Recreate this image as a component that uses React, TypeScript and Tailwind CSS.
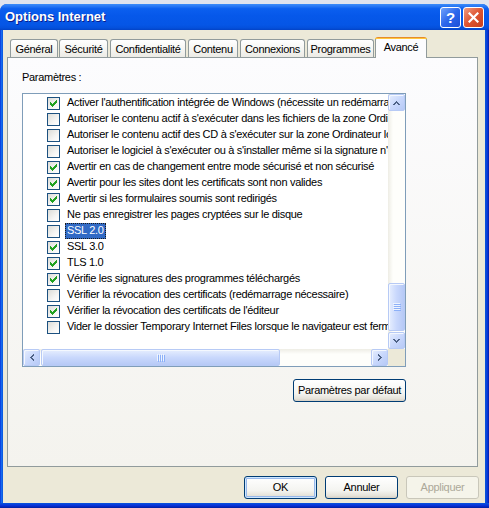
import React from "react";

const rows: [string, boolean][] = [
  ["Activer l'authentification intégrée de Windows (nécessite un redémarrage)", true],
  ["Autoriser le contenu actif à s'exécuter dans les fichiers de la zone Ordinateur local", false],
  ["Autoriser le contenu actif des CD à s'exécuter sur la zone Ordinateur local", false],
  ["Autoriser le logiciel à s'exécuter ou à s'installer même si la signature n'est pas valide", false],
  ["Avertir en cas de changement entre mode sécurisé et non sécurisé", true],
  ["Avertir pour les sites dont les certificats sont non valides", true],
  ["Avertir si les formulaires soumis sont redirigés", true],
  ["Ne pas enregistrer les pages cryptées sur le disque", false],
  ["SSL 2.0", false],
  ["SSL 3.0", true],
  ["TLS 1.0", true],
  ["Vérifie les signatures des programmes téléchargés", true],
  ["Vérifier la révocation des certificats (redémarrage nécessaire)", false],
  ["Vérifier la révocation des certificats de l'éditeur", true],
  ["Vider le dossier Temporary Internet Files lorsque le navigateur est fermé", false],
];

function CheckBox({ checked }: { checked: boolean }) {
  return (
    <div className="w-[13px] h-[13px] shrink-0 border border-[#1C5180] bg-[linear-gradient(135deg,#DCDCD7_0%,#F5F5F3_60%,#FFFFFF_100%)] flex items-center justify-center">
      {checked && (
        <svg width="7" height="7" viewBox="0 0 7 7" shapeRendering="crispEdges" fill="#21A121">
          <rect x="6" y="0" width="1" height="1" />
          <rect x="5" y="1" width="2" height="1" />
          <rect x="0" y="2" width="1" height="1" />
          <rect x="4" y="2" width="3" height="1" />
          <rect x="0" y="3" width="2" height="1" />
          <rect x="3" y="3" width="3" height="1" />
          <rect x="0" y="4" width="5" height="1" />
          <rect x="1" y="5" width="3" height="1" />
          <rect x="2" y="6" width="1" height="1" />
        </svg>
      )}
    </div>
  );
}

const scrollBtn =
  "w-[17px] h-[17px] shrink-0 rounded-[2px] border border-[#B7CAF5] bg-[linear-gradient(135deg,#E6EEFE_0%,#C9D8FC_50%,#B6C9F6_100%)] shadow-[inset_1px_1px_0_#F4F8FE] flex items-center justify-center";

function Arrow({ dir }: { dir: "up" | "down" | "left" | "right" }) {
  const up = [
    [3, 0, 1, 1],
    [2, 1, 3, 1],
    [1, 2, 2, 1],
    [4, 2, 2, 1],
    [0, 3, 2, 1],
    [5, 3, 2, 1],
  ];
  let rects = up;
  let w = 7,
    h = 4;
  if (dir === "down") rects = up.map(([x, y, rw, rh]) => [x, 3 - y, rw, rh]);
  if (dir === "left") {
    rects = up.map(([x, y, rw, rh]) => [y, x, rh, rw]);
    w = 4;
    h = 7;
  }
  if (dir === "right") {
    rects = up.map(([x, y, rw, rh]) => [3 - y, x, rh, rw]);
    w = 4;
    h = 7;
  }
  return (
    <svg width={w} height={h} viewBox={`0 0 ${w} ${h}`} shapeRendering="crispEdges" fill="#4D6185">
      {rects.map(([x, y, rw, rh], i) => (
        <rect key={i} x={x} y={y} width={rw} height={rh} />
      ))}
    </svg>
  );
}

function Grip({ vertical }: { vertical: boolean }) {
  const lines = [0, 2, 4, 6];
  return (
    <svg width={vertical ? 8 : 8} height={8} viewBox="0 0 8 8" shapeRendering="crispEdges">
      {lines.map((p) =>
        vertical ? (
          <g key={p}>
            <rect x="0" y={p} width="7" height="1" fill="#EEF4FE" />
            <rect x="1" y={p + 1} width="7" height="1" fill="#8CB0F8" />
          </g>
        ) : (
          <g key={p}>
            <rect x={p} y="0" width="1" height="7" fill="#EEF4FE" />
            <rect x={p + 1} y="1" width="1" height="7" fill="#8CB0F8" />
          </g>
        )
      )}
    </svg>
  );
}

const tabs: { label: string; w: string; ml: string; selected?: boolean }[] = [
  { label: "Général", w: "w-[48px]", ml: "ml-0" },
  { label: "Sécurité", w: "w-[49px]", ml: "ml-[1px]" },
  { label: "Confidentialité", w: "w-[76px]", ml: "ml-[2px]" },
  { label: "Contenu", w: "w-[50px]", ml: "ml-[2px]" },
  { label: "Connexions", w: "w-[65px]", ml: "ml-[2px]" },
  { label: "Programmes", w: "w-[67px]", ml: "ml-[2px]" },
  { label: "Avancé", w: "w-[52px]", ml: "ml-[1px]", selected: true },
];

const xpBtn =
  "h-[23px] rounded-[3px] border border-[#003C74] bg-[linear-gradient(to_bottom,#FFFFFF_0%,#F4F4F0_65%,#E6E3DA_88%,#D6D0C5_100%)] flex items-center justify-center leading-none";

export default function App() {
  return (
    <div className="w-[489px] h-[508px] overflow-hidden flex flex-col bg-[#dfe3ee] font-['Liberation_Sans',Arial,sans-serif] text-[11px] tracking-[-0.3px] text-black">
      <div className="h-[4px] shrink-0" />
      <div className="flex-1 flex flex-col rounded-t-[7px] overflow-hidden bg-[#0855DD]">
        {/* Title bar */}
        <div className="h-[26px] shrink-0 flex items-start bg-[linear-gradient(to_bottom,#3B8CF8_0%,#2A79F5_8%,#0B5FEF_18%,#0658EA_45%,#0556E6_80%,#0450DC_92%,#0343C6_100%)]">
          <div className="pl-[5px] h-[26px] flex items-center text-white font-bold text-[13px] tracking-normal [text-shadow:1px_1px_0_#0A1E8C]">
            Options Internet
          </div>
          <div className="flex-1" />
          <div className="flex gap-[2px] pt-[3px] pr-[5px]">
            <div className="w-[21px] h-[21px] rounded-[3px] border border-white bg-[linear-gradient(135deg,#6FA3FA_0%,#2D67EC_50%,#1C4FD7_100%)] flex items-center justify-center text-white font-bold text-[15px] tracking-normal leading-none">
              ?
            </div>
            <div className="w-[21px] h-[21px] rounded-[3px] border border-white bg-[linear-gradient(135deg,#F09C81_0%,#DE5431_50%,#C6401F_100%)] flex items-center justify-center">
              <svg width="11" height="11" viewBox="0 0 11 11">
                <path d="M1.5 1.5 L9.5 9.5 M9.5 1.5 L1.5 9.5" stroke="white" strokeWidth="2.2" strokeLinecap="square" />
              </svg>
            </div>
          </div>
        </div>

        <div className="flex-1 flex">
          <div className="w-[3px] bg-[linear-gradient(to_right,#0831D9,#166AEE,#0855DD)]" />
          {/* Client */}
          <div className="flex-1 flex flex-col bg-[#ECE9D8] pt-[7px]">
            {/* Tabs */}
            <div className="relative z-10 h-[20px] flex items-end pl-[7px]">
              {tabs.map((t) =>
                t.selected ? (
                  <div
                    key={t.label}
                    className={`${t.w} ${t.ml} h-[21px] -mb-px rounded-t-[3px] border border-b-0 border-[#919B9C] border-t-[#E68B2C] bg-[#FCFCFE] flex flex-col`}
                  >
                    <div className="h-[2px] bg-[#FFC73C] -mx-px" />
                    <div className="flex-1 flex items-center justify-center pb-[3px]">{t.label}</div>
                  </div>
                ) : (
                  <div
                    key={t.label}
                    className={`${t.w} ${t.ml} h-[18px] rounded-t-[3px] border border-b-0 border-[#919B9C] bg-[linear-gradient(to_bottom,#FFFFFF_0%,#F6F6F3_50%,#ECEBE6_100%)] flex items-center justify-center pt-px`}
                  >
                    {t.label}
                  </div>
                )
              )}
            </div>
            {/* Panel */}
            <div className="ml-[4px] w-[471px] h-[410px] border border-[#919B9C] bg-[linear-gradient(to_bottom,#FCFCFE,#F4F3EE)] pl-[14px] pt-[12px] flex flex-col">
              <div className="leading-[14px]">Paramètres :</div>
              {/* Listbox */}
              <div className="mt-[9px] w-[384px] h-[274px] border border-[#7F9DB9] bg-white flex flex-col">
                <div className="h-[255px] flex">
                  <div className="w-[365px] overflow-hidden pt-px">
                    {rows.map(([label, checked], i) => (
                      <div key={i} className="h-[16px] flex items-start whitespace-nowrap">
                        <div className="ml-[24px] mt-[2px]">
                          <CheckBox checked={checked} />
                        </div>
                        {i === 8 ? (
                          <span className="ml-[5px] h-[16px] px-px leading-[12px] border border-dotted border-[#1a1a1a] bg-[#316AC5] text-white">
                            {label}
                          </span>
                        ) : (
                          <span className="ml-[5px] h-[16px] px-px leading-[12px] border border-transparent">
                            {label}
                          </span>
                        )}
                      </div>
                    ))}
                  </div>
                  {/* vertical scrollbar */}
                  <div className="w-[17px] flex flex-col bg-[linear-gradient(to_right,#EEEDE5,#FEFEFB_30%,#FEFEFB)]">
                    <div className={scrollBtn}>
                      <Arrow dir="up" />
                    </div>
                    <div className="flex-1 flex flex-col justify-end pb-px">
                      <div className="h-[48px] w-[17px] rounded-[2px] border border-[#B7CAF5] bg-[linear-gradient(to_right,#E6EEFE_0%,#C9D8FC_50%,#B6C9F6_100%)] shadow-[inset_1px_1px_0_#F4F8FE] flex items-center justify-center">
                        <Grip vertical />
                      </div>
                    </div>
                    <div className={scrollBtn}>
                      <Arrow dir="down" />
                    </div>
                  </div>
                </div>
                {/* horizontal scrollbar */}
                <div className="h-[17px] flex">
                  <div className="w-[365px] flex bg-[linear-gradient(to_bottom,#EEEDE5,#FEFEFB_30%,#FEFEFB)]">
                    <div className={scrollBtn}>
                      <Arrow dir="left" />
                    </div>
                    <div className="flex-1 flex">
                      <div className="ml-px w-[239px] h-[17px] rounded-[2px] border border-[#B7CAF5] bg-[linear-gradient(to_bottom,#E6EEFE_0%,#C9D8FC_50%,#B6C9F6_100%)] shadow-[inset_1px_1px_0_#F4F8FE] flex items-center justify-center">
                        <Grip vertical={false} />
                      </div>
                    </div>
                    <div className={scrollBtn}>
                      <Arrow dir="right" />
                    </div>
                  </div>
                  <div className="w-[17px] bg-[#ECE9D8]" />
                </div>
              </div>
              <div className="mt-[12px] w-[384px] flex justify-end">
                <div className={`${xpBtn} w-[113px]`}>Paramètres par défaut</div>
              </div>
            </div>
            {/* Bottom buttons */}
            <div className="mt-[9px] flex justify-end gap-[8px] pr-[6px]">
              <div className={`${xpBtn} w-[73px] shadow-[inset_0_0_0_1px_#CEE7FF,inset_0_0_0_2px_#98B8EA]`}>OK</div>
              <div className={`${xpBtn} w-[73px]`}>Annuler</div>
              <div className="h-[23px] w-[73px] rounded-[3px] border border-[#C9C7BA] bg-[#F5F4EA] text-[#ACA899] flex items-center justify-center leading-none">
                Appliquer
              </div>
            </div>
          </div>
          <div className="w-[4px] bg-[linear-gradient(to_right,#0855DD,#0B48D5,#0831D9,#001EA0)]" />
        </div>
        <div className="h-[5px] bg-[linear-gradient(to_bottom,#0855DD,#0831D9,#001EA0)]" />
      </div>
    </div>
  );
}
